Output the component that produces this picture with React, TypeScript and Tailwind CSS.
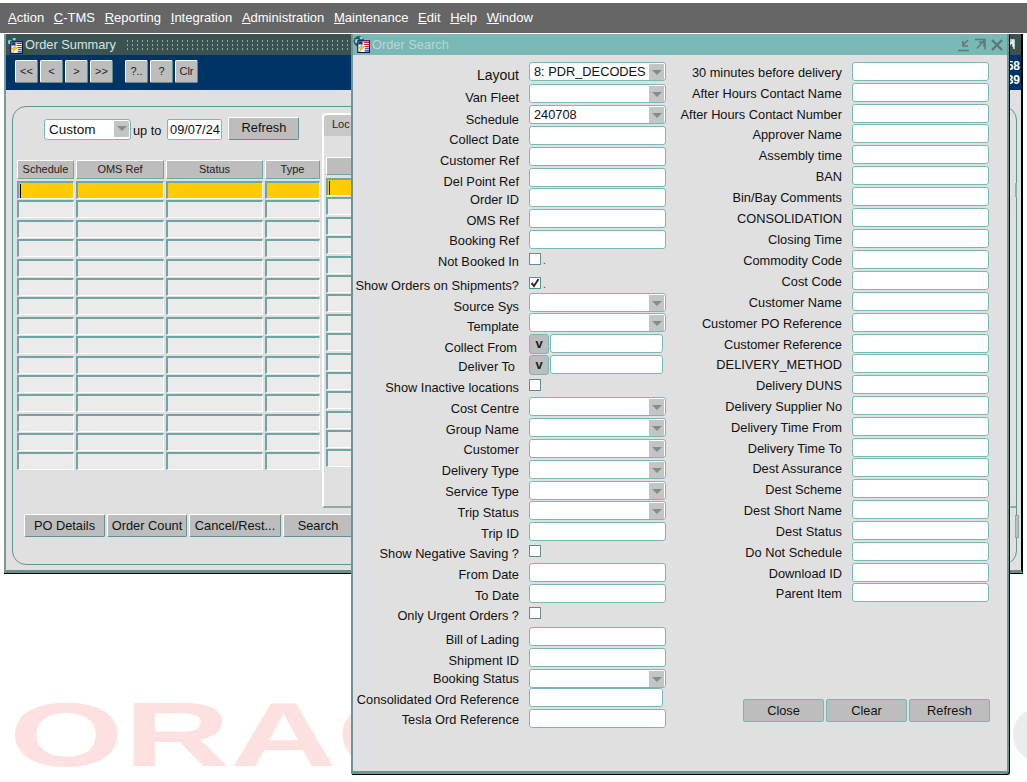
const menus = [
  ["A", "ction"],
  ["C", "-TMS"],
  ["R", "eporting"],
  ["I", "ntegration"],
  ["A", "dministration"],
  ["M", "aintenance"],
  ["E", "dit"],
  ["H", "elp"],
  ["W", "indow"],
];

type Kind = "select" | "text" | "check" | "lov";
type LeftRow = {
  label: string;
  labelStep: string;
  kind: Kind;
  fieldStep: string;
  value?: string;
  checked?: boolean;
  dot?: boolean;
  inset?: string;
  narrow?: boolean;
};

const leftRows: LeftRow[] = [
  { label: "Layout", labelStep: "h-[23px] text-[14px]", kind: "select", fieldStep: "h-[22px]", value: "8: PDR_DECODES" },
  { label: "Van Fleet", labelStep: "h-[22px]", kind: "select", fieldStep: "h-[21px]" },
  { label: "Schedule", labelStep: "h-[20px]", kind: "select", fieldStep: "h-[21px]", value: "240708" },
  { label: "Collect Date", labelStep: "h-[21px]", kind: "text", fieldStep: "h-[21px]" },
  { label: "Customer Ref", labelStep: "h-[21px]", kind: "text", fieldStep: "h-[21px]" },
  { label: "Del Point Ref", labelStep: "h-[18px]", kind: "text", fieldStep: "h-[20px]" },
  { label: "Order ID", labelStep: "h-[21px]", kind: "text", fieldStep: "h-[21px]" },
  { label: "OMS Ref", labelStep: "h-[20px]", kind: "text", fieldStep: "h-[21px]" },
  { label: "Booking Ref", labelStep: "h-[21px]", kind: "text", fieldStep: "h-[23px]" },
  { label: "Not Booked In", labelStep: "h-[24px]", kind: "check", fieldStep: "h-[24px]", dot: true },
  { label: "Show Orders on Shipments?", labelStep: "h-[21px]", kind: "check", fieldStep: "h-[16px]", checked: true, dot: true },
  { label: "Source Sys", labelStep: "h-[20px]", kind: "select", fieldStep: "h-[20px]" },
  { label: "Template", labelStep: "h-[21px]", kind: "select", fieldStep: "h-[21px]" },
  { label: "Collect From", labelStep: "h-[19px]", kind: "lov", fieldStep: "h-[21px]", inset: "pr-[2px]" },
  { label: "Deliver To", labelStep: "h-[21px]", kind: "lov", fieldStep: "h-[24px]", inset: "pr-[4px]" },
  { label: "Show Inactive locations", labelStep: "h-[21px]", kind: "check", fieldStep: "h-[18px]" },
  { label: "Cost Centre", labelStep: "h-[21px]", kind: "select", fieldStep: "h-[21px]" },
  { label: "Group Name", labelStep: "h-[20px]", kind: "select", fieldStep: "h-[21px]" },
  { label: "Customer", labelStep: "h-[21px]", kind: "select", fieldStep: "h-[21px]" },
  { label: "Delivery Type", labelStep: "h-[21px]", kind: "select", fieldStep: "h-[21px]" },
  { label: "Service Type", labelStep: "h-[21px]", kind: "select", fieldStep: "h-[20px]" },
  { label: "Trip Status", labelStep: "h-[21px]", kind: "select", fieldStep: "h-[21px]" },
  { label: "Trip ID", labelStep: "h-[20px]", kind: "text", fieldStep: "h-[23px]" },
  { label: "Show Negative Saving ?", labelStep: "h-[21px]", kind: "check", fieldStep: "h-[18px]" },
  { label: "From Date", labelStep: "h-[21px]", kind: "text", fieldStep: "h-[21px]" },
  { label: "To Date", labelStep: "h-[20px]", kind: "text", fieldStep: "h-[23px]" },
  { label: "Only Urgent Orders ?", labelStep: "h-[24px]", kind: "check", fieldStep: "h-[20px]" },
  { label: "Bill of Lading", labelStep: "h-[21px]", kind: "text", fieldStep: "h-[21px]" },
  { label: "Shipment ID", labelStep: "h-[18px]", kind: "text", fieldStep: "h-[21px]" },
  { label: "Booking Status", labelStep: "h-[21px]", kind: "select", fieldStep: "h-[19px]" },
  { label: "Consolidated Ord Reference", labelStep: "h-[20px]", kind: "text", fieldStep: "h-[21px]", narrow: true },
  { label: "Tesla Ord Reference", labelStep: "h-[20px]", kind: "text", fieldStep: "h-[21px]" },
];

const rightRows = [
  ["30 minutes before delivery", "h-[21px]"],
  ["After Hours Contact Name", "h-[21px]"],
  ["After Hours Contact Number", "h-[20px]"],
  ["Approver Name", "h-[21px]"],
  ["Assembly time", "h-[21px]"],
  ["BAN", "h-[21px]"],
  ["Bin/Bay Comments", "h-[21px]"],
  ["CONSOLIDATION", "h-[21px]"],
  ["Closing Time", "h-[21px]"],
  ["Commodity Code", "h-[21px]"],
  ["Cost Code", "h-[21px]"],
  ["Customer Name", "h-[21px]"],
  ["Customer PO Reference", "h-[21px]"],
  ["Customer Reference", "h-[20px]"],
  ["DELIVERY_METHOD", "h-[21px]"],
  ["Delivery DUNS", "h-[21px]"],
  ["Delivery Supplier No", "h-[21px]"],
  ["Delivery Time From", "h-[21px]"],
  ["Delivery Time To", "h-[20px]"],
  ["Dest Assurance", "h-[21px]"],
  ["Dest Scheme", "h-[21px]"],
  ["Dest Short Name", "h-[21px]"],
  ["Dest Status", "h-[21px]"],
  ["Do Not Schedule", "h-[21px]"],
  ["Download ID", "h-[20px]"],
  ["Parent Item", "h-[21px]"],
];

const WindowIcon = () => (
  <svg viewBox="0 0 16 16" className="w-[17px] h-[17px] shrink-0">
    <circle cx="5.5" cy="5" r="5" fill="#16606f" />
    <path d="M2 3h3l1 2-2 2-2-1zM6 1h3v2H7z" fill="#9be09b" />
    <rect x="4.5" y="4.5" width="11" height="11" fill="#fff" stroke="#10104a" />
    <path d="M10 6h5M10 8h5M11 10h4" stroke="#d02020" strokeWidth="1" />
    <rect x="5" y="5" width="4" height="3" fill="#2030a0" />
    <path d="M9 7 5.5 11.5h2L6 15l4.5-5h-2z" fill="#f5d020" stroke="#b08000" strokeWidth=".4" />
    <path d="M11 12h4M11 14h4" stroke="#2030a0" />
  </svg>
);

const WindowControls = () => (
  <svg viewBox="0 0 46 14" className="w-[46px] h-[14px] shrink-0" fill="none" stroke="#5f7777" strokeWidth="2">
    <path d="M0 12.5h11M10 2 5 7M5 3v5h5" strokeWidth="1.6" />
    <path d="M17 1.5h10v10M26 2.5l-7 8M21 4h5v5" strokeWidth="1.4" />
    <path d="M34 2l10 10M44 2 34 12" strokeWidth="2.4" />
  </svg>
);

const ToolButton = ({ text }: { text: string }) => (
  <div className="w-[23px] h-[23px] flex items-center justify-center bg-[#bdbdbd] border border-t-white border-l-white border-r-[#5f9090] border-b-[#5f9090] rounded-[2px] text-[11px] text-[#222]">
    {text}
  </div>
);

const FlatButton = ({ text, width }: { text: string; width: string }) => (
  <div className={`${width} h-[23px] shrink-0 flex items-center justify-center bg-[#bdbdbd] border border-t-white border-l-white border-r-[#5f9090] border-b-[#5f9090] rounded-[2px] text-[12.8px] text-[#111]`}>
    {text}
  </div>
);

const Arrow = () => (
  <div className="w-[15px] h-[16px] mt-[1px] mr-[1px] shrink-0 bg-[#c4c4c4] flex items-center justify-center">
    <div className="w-0 h-0 border-x-[5px] border-x-transparent border-t-[5px] border-t-[#7f8f8f]" />
  </div>
);

const SelectBox = ({ value }: { value?: string }) => (
  <div className="w-[137px] h-[19px] flex justify-between bg-white border border-[#78b8b5] rounded-[3px] text-[12.8px] leading-[17px] pl-1">
    <span className="whitespace-nowrap">{value}</span>
    <Arrow />
  </div>
);

const TextBox = ({ width = "w-[137px]" }: { width?: string }) => (
  <div className={`${width} h-[19px] shrink-0 bg-white border border-[#78b8b5] rounded-[3px]`} />
);

const CheckBox = ({ checked, dot }: { checked?: boolean; dot?: boolean }) => (
  <div className="flex items-end gap-[2px]">
    <div className="w-[12px] h-[12px] bg-white border border-[#5f8f8f] flex items-center justify-center">
      {checked && (
        <svg viewBox="0 0 10 10" className="w-[10px] h-[10px]" fill="none" stroke="#333" strokeWidth="2">
          <path d="M1.5 5 4 8l4.5-7" />
        </svg>
      )}
    </div>
    {dot && <span className="text-[10px] leading-[8px] text-[#333]">.</span>}
  </div>
);

const Field = ({ row }: { row: LeftRow }) => {
  if (row.kind === "select") return <SelectBox value={row.value} />;
  if (row.kind === "check") return <CheckBox checked={row.checked} dot={row.dot} />;
  if (row.kind === "lov")
    return (
      <div className="flex gap-[1px]">
        <div className="w-[20px] h-[20px] bg-[#bdbdbd] border border-[#78b8b5] rounded-[3px] flex items-center justify-center font-bold text-[13px] text-[#222]">
          v
        </div>
        <TextBox width="w-[113px]" />
      </div>
    );
  return <TextBox width={row.narrow ? "w-[134px]" : "w-[137px]"} />;
};

const GridRows = ({ widths, rows }: { widths: string[]; rows: number }) => (
  <div className="flex flex-col gap-y-[1.4px]">
    {Array.from({ length: rows }).map((_, r) => (
      <div key={r} className="flex gap-[2px]">
        {widths.map((w, c) => (
          <div
            key={c}
            className={`${w} h-[18px] border-t-2 border-l-2 border-t-[#6fa5a3] border-l-[#6fa5a3] border-b border-r border-b-white border-r-white relative ${
              r === 0 ? "bg-[#ffcc00]" : "bg-[#ebebeb]"
            }`}
          >
            {r === 0 && c === 0 && <div className="absolute left-[1px] top-[1px] w-px h-[14px] bg-black" />}
          </div>
        ))}
      </div>
    ))}
  </div>
);

const headers = [
  ["Schedule", "w-[57px]"],
  ["OMS Ref", "w-[88px]"],
  ["Status", "w-[97px]"],
  ["Type", "w-[55px]"],
];

const OrderSummary = () => (
  <div className="absolute left-[4px] top-[34px] w-[1019px] h-[539px] flex flex-col bg-[#e0e0e0] border-l-2 border-l-[#7a9a9a] border-r-2 border-r-black border-b-[3px] border-b-[#6b8f8f] shadow-[0_1px_0_#000]">
    <div className="h-[21px] shrink-0 flex items-center gap-[1px] bg-[#3b5350] pt-px">
      <WindowIcon />
      <span className="text-[#d5e3e3] text-[12.8px] ml-[1px] mr-2">Order Summary</span>
      <div className="h-[12px] flex-1 bg-[radial-gradient(circle,#8fa8a8_1px,transparent_1px)] bg-[length:5px_4px]" />
      <svg viewBox="0 0 12 12" className="w-3 h-3 mr-[5px]" fill="none" stroke="#e8efef" strokeWidth="1.5">
        <path d="M1 1h9v9M9 2 3 9M4 3h5v5" />
      </svg>
    </div>
    <div className="h-[35px] shrink-0 flex justify-between bg-[#003366]">
      <div className="flex pl-[9px] pt-[5px]">
        <div className="flex gap-[2px]">
          <ToolButton text="<<" />
          <ToolButton text="<" />
          <ToolButton text=">" />
          <ToolButton text=">>" />
        </div>
        <div className="flex gap-[2px] ml-[12px]">
          <ToolButton text="?.." />
          <ToolButton text="?" />
          <ToolButton text="Clr" />
        </div>
      </div>
      <div className="flex flex-col items-end pr-[1px] pt-[4px] text-white text-[12px] leading-[14px] font-bold">
        <span>58</span>
        <span>39</span>
      </div>
    </div>
    <div className="flex-1 mt-[16px] ml-[6px] mr-[4px] mb-[5px] border border-[#5f9595] rounded-[14px] flex flex-col">
      <div className="flex h-[401px]">
        <div className="w-[309px] shrink-0 pl-[4px] pt-[11px]">
          <div className="flex items-center pl-[27px] h-[22px] text-[12.8px] text-[#111]">
            <div className="w-[87px] h-[21px] flex justify-between bg-white border border-[#78b8b5] rounded-[3px] pl-1 leading-[20px] text-[13.5px]">
              Custom
              <Arrow />
            </div>
            <span className="ml-[2px] mt-[3px]">up to</span>
            <div className="w-[55px] h-[21px] ml-[6px] bg-white border border-[#78b8b5] rounded-[2px] text-center leading-[19px]">09/07/24</div>
            <div className="ml-[6px] -mt-[2px]">
              <FlatButton text="Refresh" width="w-[71px]" />
            </div>
          </div>
          <div className="flex gap-[2px] mt-[20px] mb-[2px]">
            {headers.map(([h, w]) => (
              <div key={h} className={`${w} h-[19px] flex items-center justify-center bg-[#bdbdbd] border-b border-r border-b-[#6fa5a3] border-r-[#6fa5a3] border-t border-l border-t-white border-l-white text-[11px] text-[#222]`}>
                {h}
              </div>
            ))}
          </div>
          <GridRows widths={["w-[57px]", "w-[88px]", "w-[97px]", "w-[55px]"]} rows={15} />
        </div>
        <div className="relative flex-1 mt-[6px] border-l-2 border-b-2 border-l-white border-b-[#8fa8a8] rounded-tl-[4px]">
          <div className="w-[60px] h-[23px] bg-[#c8c8c8] border-t-2 border-t-white rounded-tl-[4px] pl-[8px] text-[11px] leading-[18px] text-[#222]">Loc</div>
          <div className="pl-[2px] pt-[21px]">
            <div className="h-[18px] w-[200px] bg-[#bdbdbd] border border-t-white border-l-white border-r-[#6fa5a3] border-b-[#6fa5a3] mb-[3px]" />
            <GridRows widths={["w-[200px]"]} rows={15} />
          </div>
          <div className="absolute -right-[1px] top-[70px] w-[2px] h-[14px] border border-[#78b8b5]" />
          <div className="absolute -right-[3px] top-[402px] w-[4px] h-[23px] bg-[#bdbdbd] border border-[#8fa8a8]" />
        </div>
      </div>
      <div className="flex gap-[2px] pl-[11px] pt-[6px]">
        <FlatButton text="PO Details" width="w-[81px]" />
        <FlatButton text="Order Count" width="w-[80px]" />
        <FlatButton text="Cancel/Rest..." width="w-[92px]" />
        <FlatButton text="Search" width="w-[70px]" />
      </div>
    </div>
  </div>
);

const DialogButton = ({ text }: { text: string }) => (
  <div className="w-[81px] h-[23px] flex items-center justify-center bg-[#bdbdbd] border border-[#78b8b5] rounded-[2px] text-[12.8px] text-[#111]">
    {text}
  </div>
);

const OrderSearch = () => (
  <div className="absolute left-[351px] top-[34px] w-[658px] h-[740px] flex flex-col bg-[#e0e0e0] border-l-2 border-l-[#6f9292] border-r-2 border-r-[#6f9292] border-b-[3px] border-b-[#6f9292] rounded-br-[3px] shadow-[1px_1px_0_#000]">
    <div className="h-[21px] shrink-0 flex items-center justify-between bg-[#78b8b5] pr-[3px]">
      <div className="flex items-center gap-[2px]">
        <WindowIcon />
        <span className="text-[#b5d8d6] text-[12.8px]">Order Search</span>
      </div>
      <WindowControls />
    </div>
    <div className="flex-1 flex">
      <div className="w-[166px] shrink-0 pt-[12px] flex flex-col text-right text-[12.8px] leading-[16px] text-[#111]">
        {leftRows.map((r) => (
          <div key={r.label} className={`${r.labelStep} ${r.inset ?? ""} shrink-0 whitespace-nowrap`}>
            {r.label}
          </div>
        ))}
      </div>
      <div className="w-[150px] shrink-0 ml-[10px] pt-[7px] flex flex-col text-[#111]">
        {leftRows.map((r) => (
          <div key={r.label} className={`${r.fieldStep} shrink-0`}>
            <Field row={r} />
          </div>
        ))}
      </div>
      <div className="flex-1 min-w-0 flex flex-col pt-[7px]">
        <div className="flex flex-col">
          {rightRows.map(([label, step]) => (
            <div key={label} className={`${step} shrink-0 flex justify-end pr-[18px]`}>
              <div className="text-[12.8px] leading-[21px] text-[#111] mr-[10px] whitespace-nowrap">{label}</div>
              <TextBox />
            </div>
          ))}
        </div>
        <div className="flex gap-[2px] mt-[95px] ml-[64px]">
          <DialogButton text="Close" />
          <DialogButton text="Clear" />
          <DialogButton text="Refresh" />
        </div>
      </div>
    </div>
  </div>
);

export default function App() {
  return (
    <div className="relative w-[1027px] h-[782px] overflow-hidden bg-white font-['Liberation_Sans',Arial,sans-serif]">
      <div className="absolute left-[9px] top-[689px] text-[91px] leading-none font-bold text-[#fde0e0] scale-x-[1.62] origin-left whitespace-nowrap">
        ORACLE
      </div>
      <div className="absolute left-[1007px] top-[689px] text-[91px] leading-none font-bold text-[#ececec] scale-x-[1.62] origin-left">
        O
      </div>
      <div className="mt-[3px] h-[30px] bg-[#666666] flex items-center gap-[9.7px] pl-[8px] text-[13px] text-white">
        {menus.map(([first, rest], i) => (
          <span key={i}>
            <span className="underline">{first}</span>
            {rest}
          </span>
        ))}
      </div>
      <OrderSummary />
      <OrderSearch />
    </div>
  );
}
